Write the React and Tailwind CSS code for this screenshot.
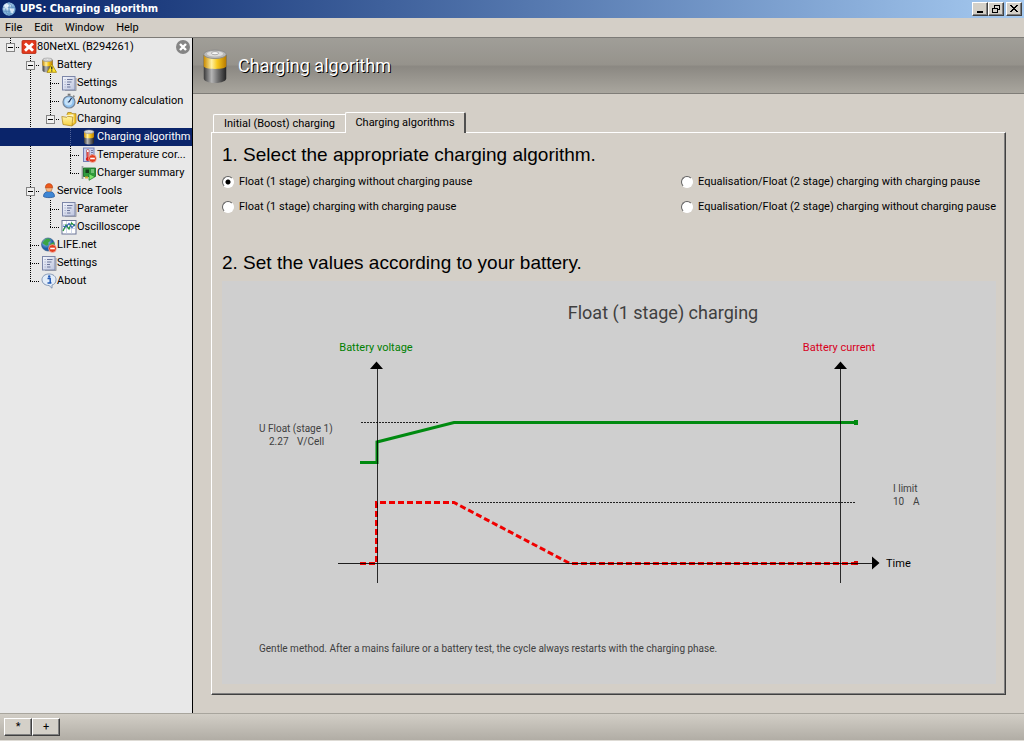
import React, { useState } from "react";

/* ---------- icons ---------- */

function Icon({ children, className = "w-4 h-4" }) {
  return (
    <svg viewBox="0 0 16 16" className={`${className} shrink-0`} aria-hidden="true">
      {children}
    </svg>
  );
}

function BatteryShape() {
  return (
    <g>
      <path d="M3 3v10.500c0 1 2 2 5 2s5-1 5-2V3z" fill="url(#cellDark)" />
      <path d="M3 3v5c0 .8 2 1.300 5 1.300s5-.5 5-1.300V3z" fill="url(#cellGold)" />
      <ellipse cx="8" cy="2.800" rx="5" ry="1.900" fill="#b9b9b9" stroke="#8a8a8a" strokeWidth=".4" />
      <ellipse cx="8" cy="2.600" rx="3.600" ry="1.200" fill="#dedede" />
      <ellipse cx="8" cy="2.300" rx="1.600" ry=".7" fill="#f8f8f8" stroke="#8a8a8a" strokeWidth=".3" />
    </g>
  );
}

function Gradients() {
  return (
    <svg className="absolute w-0 h-0" aria-hidden="true">
      <defs>
        <linearGradient id="cellDark">
          <stop offset="0" stopColor="#3a3a3a" />
          <stop offset=".35" stopColor="#b5b5b5" />
          <stop offset=".65" stopColor="#6a6a6a" />
          <stop offset="1" stopColor="#222" />
        </linearGradient>
        <linearGradient id="cellGold">
          <stop offset="0" stopColor="#c98a00" />
          <stop offset=".35" stopColor="#fff0a0" />
          <stop offset=".6" stopColor="#f7c81c" />
          <stop offset="1" stopColor="#b87a00" />
        </linearGradient>
        <linearGradient id="folderFill" x2="0" y2="1">
          <stop offset="0" stopColor="#fff3a8" />
          <stop offset="1" stopColor="#f6d040" />
        </linearGradient>
        <radialGradient id="globeFill" cx=".35" cy=".3">
          <stop offset="0" stopColor="#b9e4ff" />
          <stop offset="1" stopColor="#1d5fa8" />
        </radialGradient>
        <radialGradient id="paleGlobe" cx=".35" cy=".3">
          <stop offset="0" stopColor="#ffffff" />
          <stop offset="1" stopColor="#7fb0d8" />
        </radialGradient>
        <linearGradient id="pageFill" x2="1" y2="1">
          <stop offset="0" stopColor="#f4f6fc" />
          <stop offset="1" stopColor="#bcc4de" />
        </linearGradient>
      </defs>
    </svg>
  );
}

const AppIcon = () => (
  <Icon className="w-3.5 h-3.5">
    <circle cx="8" cy="8" r="7.500" fill="url(#paleGlobe)" />
    <path d="M1 6h14M1 10.500h14M8 .5v15M8 .5C3 4 3 12 8 15.500M8 .5c5 3.500 5 11.500 0 15" fill="none" stroke="#5d8fc0" strokeWidth="1" />
    <path d="M3 3.500l3-1.500 2 2-2 3-3 .5zM9 8l4-1 1 2-2 4-2-1z" fill="#eef6ff" opacity=".8" />
  </Icon>
);

const FaultIcon = () => (
  <Icon>
    <rect x="1" y="1.500" width="14" height="13" rx="1" fill="#e2381c" stroke="#b42a12" strokeWidth=".8" />
    <path d="M5 3.500l3 2.700 3-2.700 2 2L10.300 8l2.700 2.700-2 2L8 10l-3 2.700-2-2L5.700 8 3 5.500z" fill="#fff" />
  </Icon>
);

const BatteryIcon = () => (
  <Icon>
    <BatteryShape />
  </Icon>
);

const BatteryWarnIcon = () => (
  <Icon>
    <g transform="translate(-1.500 0)">
      <BatteryShape />
    </g>
    <path d="M10.800 7L15.500 15.300H6z" fill="#ffe52e" stroke="#a88600" strokeWidth=".8" strokeLinejoin="round" />
    <path d="M10.800 9.500v3" stroke="#222" strokeWidth="1.300" />
    <circle cx="10.800" cy="13.900" r=".7" fill="#222" />
  </Icon>
);

const PageIcon = () => (
  <Icon>
    <path d="M15 3v12.700H4" fill="none" stroke="#9a9a9a" strokeWidth="1" />
    <rect x="1.500" y="1.500" width="12.500" height="13.500" fill="url(#pageFill)" stroke="#7c86a8" />
    <path d="M6 4.500h5.500M6 7h4.500M6 9.500h3M6 12h3.500" stroke="#6b7499" strokeWidth="1" />
    <path d="M3.500 4.500h1.200M3.500 7h1.200M3.500 9.500h1.200M3.500 12h1.200" stroke="#a3aac6" strokeWidth="1" />
  </Icon>
);

const StopwatchIcon = () => (
  <Icon>
    <path d="M11.500 3.500l1.200-1.500 1.300 1.200-1.300 1.500z" fill="#8a8a8a" />
    <rect x="6.700" y=".7" width="2.800" height="2" fill="#777" />
    <circle cx="8" cy="9" r="6" fill="#8fc1ee" stroke="#75869a" strokeWidth="1.200" />
    <circle cx="7.500" cy="8.500" r="3.900" fill="#c6e2f8" />
    <path d="M8 9l2.500-4M8 9H6.800" stroke="#1c2e55" strokeWidth="1.200" />
  </Icon>
);

const FolderIcon = () => (
  <Icon>
    <path d="M6 3.500l.8-2h3.500l.7 1.200h4v9l-3.500 3z" fill="#f2c62e" stroke="#a07a12" strokeWidth=".7" />
    <path d="M5.500 4l7-.8v8L8 14z" fill="#fff8cc" />
    <path d="M.8 5.500l5 .8 1-1 5 .7L11 15 2 13.500z" fill="url(#folderFill)" stroke="#ad8110" strokeWidth=".7" />
  </Icon>
);

const MinusBadge = () => (
  <g>
    <circle cx="11.500" cy="11.500" r="3.900" fill="#e23c1e" stroke="#fbd0c8" strokeWidth=".6" />
    <rect x="9.200" y="10.700" width="4.600" height="1.600" fill="#fff" />
  </g>
);

const ThermoIcon = () => (
  <Icon>
    <rect x="2.500" y="1" width="10.500" height="13.500" fill="#c7cdee" stroke="#7580b5" />
    <path d="M10 3.500h2M10 5.500h2M10 7.500h2" stroke="#5d6486" strokeWidth=".8" />
    <rect x="5.500" y="2.500" width="2.600" height="8" rx="1.200" fill="#fff" stroke="#a33" strokeWidth=".6" />
    <rect x="6.200" y="5" width="1.300" height="7" fill="#d8201c" />
    <circle cx="6.800" cy="12" r="2" fill="#d8201c" />
    <MinusBadge />
  </Icon>
);

const CardIcon = () => (
  <Icon>
    <path d="M1.500 1v13" stroke="#9aa0a0" strokeWidth="1.800" />
    <path d="M2.500 3H14.500v8.500H2.500z" fill="#2f9a3c" stroke="#14641f" strokeWidth=".8" />
    <rect x="4.500" y="4.500" width="3.500" height="3.500" fill="#173d1c" />
    <path d="M10 5h3M10 7h3" stroke="#b5e8b0" strokeWidth="1" />
    <path d="M4 11.500v2h3v-2" fill="#d8b53a" />
    <path d="M8 8.500l6 3.300-6 3.500z" fill="#7be36a" stroke="#1b7a25" strokeWidth=".7" />
  </Icon>
);

const PersonIcon = () => (
  <Icon>
    <path d="M2.500 13.500c0-3.500 2-5 5.500-5s5.500 1.500 5.500 5c-1 1.500-10 1.500-11 0z" fill="#3e86d4" stroke="#1e4f92" strokeWidth=".7" />
    <circle cx="8" cy="5.500" r="3.200" fill="#f4b98a" stroke="#a8703a" strokeWidth=".5" />
    <path d="M4.300 4.800C4.300 2 6 .6 8 .6s3.700 1.400 3.700 4.200z" fill="#ee5a1c" stroke="#a63408" strokeWidth=".5" />
  </Icon>
);

const ScopeIcon = () => (
  <Icon>
    <rect x="1" y="1.500" width="14" height="13.500" fill="#fff" stroke="#6c7698" />
    <path d="M1.500 5.500h13M1.500 9.500h13M5.500 2v12.500M10.500 2v12.500" stroke="#c3cbe4" strokeWidth=".8" />
    <path d="M2 12l3-6 3 4 2.500-6L14 7" fill="none" stroke="#25953c" strokeWidth="1.300" />
    <path d="M2 7l3 1 3-3.500 3 4 3-3.500" fill="none" stroke="#3560b8" strokeWidth="1.100" />
  </Icon>
);

const GlobeIcon = () => (
  <Icon>
    <circle cx="7" cy="7.500" r="6.500" fill="url(#globeFill)" stroke="#2a4f7c" strokeWidth=".6" />
    <path d="M4 2.500C6.500.8 9 1.500 9.500 3S7 4.500 7.500 6.500 5.500 9.500 4 8 1.500 7 1.500 5.500zM9.500 6.500l3.500-1.500c1 2.500 0 5-1.500 6.500S8.500 8.500 9.500 6.500z" fill="#3ba544" />
    <MinusBadge />
  </Icon>
);

const InfoIcon = () => (
  <Icon>
    <path d="M8 1c4 0 7 2.300 7 5.700s-2 4.800-4 5.300v3.200L8 12.500c-4 0-7-2.400-7-5.800S4 1 8 1z" fill="#e3edf9" stroke="#7a8eae" strokeWidth=".9" />
    <circle cx="8.200" cy="3.500" r="1.200" fill="#2259b5" />
    <path d="M6.500 5.600h2.700v4.200h1M6.500 9.900h3.900" fill="none" stroke="#2259b5" strokeWidth="1.500" />
  </Icon>
);

/* ---------- tree ---------- */

/* Guides per row: "" empty, "v" pass-through, "t" branch, "l" last branch,
   "m" open node with more siblings, "o" open node as last sibling. */
const TREE = [
  { guides: ["r"], icon: FaultIcon, label: "80NetXL (B294261)", closable: true },
  { guides: ["", "m"], icon: BatteryWarnIcon, label: "Battery" },
  { guides: ["", "v", "t"], icon: PageIcon, label: "Settings" },
  { guides: ["", "v", "t"], icon: StopwatchIcon, label: "Autonomy calculation" },
  { guides: ["", "v", "o"], icon: FolderIcon, label: "Charging" },
  { guides: ["", "v", "", "t"], icon: BatteryIcon, label: "Charging algorithm" },
  { guides: ["", "v", "", "t"], icon: ThermoIcon, label: "Temperature cor..." },
  { guides: ["", "v", "", "l"], icon: CardIcon, label: "Charger summary" },
  { guides: ["", "m"], icon: PersonIcon, label: "Service Tools" },
  { guides: ["", "v", "t"], icon: PageIcon, label: "Parameter" },
  { guides: ["", "v", "l"], icon: ScopeIcon, label: "Oscilloscope" },
  { guides: ["", "t"], icon: GlobeIcon, label: "LIFE.net" },
  { guides: ["", "t"], icon: PageIcon, label: "Settings" },
  { guides: ["", "l"], icon: InfoIcon, label: "About" },
];

function Guide({ kind, dim }) {
  const open = kind === "m" || kind === "o" || kind === "r";
  const end = kind === "l" || kind === "o" || kind === "r" ? 9 : 18;
  const ink = dim ? "#51639a" : "#000";
  return (
    <svg viewBox="0 0 20 18" className="w-5 h-[18px] shrink-0" shapeRendering="crispEdges" aria-hidden="true">
      {kind && !(dim && kind === "v") && <path d={`M10.500 0V${end}`} stroke={ink} strokeDasharray="1 1" />}
      {kind && kind !== "v" && !dim && <path d="M10 9.500H19" stroke={ink} strokeDasharray="1 1" />}
      {open && (
        <g>
          <rect x="6.500" y="5.500" width="8" height="8" fill="#f0f0f0" stroke="#848484" />
          <path d="M8 9.500h5" stroke="#000" />
        </g>
      )}
    </svg>
  );
}

function Tree() {
  const [selected, setSelected] = useState(5);
  return (
    <nav className="w-[193px] shrink-0 bg-[#e8e8e8] border-r border-black" aria-label="Device tree">
      <ul>
        {TREE.map((row, i) => {
          const RowIcon = row.icon;
          const on = i === selected;
          return (
            <li key={i} className={on ? "flex h-[18px] items-center bg-[#0a246a] text-white" : "flex h-[18px] items-center text-black"}>
              {row.guides.map((g, k) => (
                <Guide key={k} kind={g} dim={on} />
              ))}
              <button type="button" onClick={() => setSelected(i)} className="flex flex-1 items-center pl-px whitespace-nowrap text-left">
                <RowIcon />
                <span>{row.label}</span>
              </button>
              {row.closable && (
                <button type="button" aria-label="Close" className="mr-px">
                  <Icon>
                    <circle cx="8" cy="8" r="7" fill="#858585" />
                    <path d="M5 5l6 6M11 5l-6 6" stroke="#fff" strokeWidth="2.400" />
                  </Icon>
                </button>
              )}
            </li>
          );
        })}
      </ul>
    </nav>
  );
}

/* ---------- window chrome ---------- */

const BEVEL = "bg-[#d4d0c8] border border-t-white border-l-white border-r-[#404040] border-b-[#404040] shadow-[inset_-1px_-1px_0_#808080]";

function CaptionButton({ label, children }) {
  return (
    <button type="button" aria-label={label} className={`${BEVEL} w-4 h-3.5 flex items-center justify-center`}>
      <svg viewBox="0 0 12 10" className="w-3 h-2.5 shrink-0" shapeRendering="crispEdges" fill="none" stroke="#000" aria-hidden="true">
        {children}
      </svg>
    </button>
  );
}

function TitleBar() {
  return (
    <header className="flex h-[18px] items-center gap-0.5 bg-linear-to-r from-[#0a246a] to-[#a6caf0] pl-0.5 pr-0.5">
      <AppIcon />
      <h1 className="flex-1 pl-0.5 font-['DejaVu_Sans_Condensed','DejaVu_Sans',Tahoma,sans-serif] font-bold text-white">UPS: Charging algorithm</h1>
      <div className="flex">
        <CaptionButton label="Minimize">
          <path d="M3 8h6" strokeWidth="2" />
        </CaptionButton>
        <CaptionButton label="Restore">
          <path d="M4 1h6M4.500 1v3M9.500 1v5M7 5.500h3M4 1.500h6M2 4h6M2 4.500h6M2.500 4v5M7.500 4v5M2 8.500h6" />
        </CaptionButton>
      </div>
      <CaptionButton label="Close">
        <path d="M2 1h2v1h1v1h2V2h1V1h2v1H9v1H8v1H7v1h1v1h1v1h1v1H8V7H7V6H5v1H4v1H2V7h1V6h1V5h1V4H4V3H3V2H2z" fill="#000" stroke="none" />
      </CaptionButton>
    </header>
  );
}

function MenuBar() {
  return (
    <nav className="flex h-5 items-center gap-3 border-b border-[#7d7b77] pl-[5px]">
      {["File", "Edit", "Window", "Help"].map((m) => (
        <button type="button" key={m}>
          {m}
        </button>
      ))}
    </nav>
  );
}

/* ---------- content ---------- */

function AlgorithmChart() {
  return (
    <svg viewBox="0 0 774 350" className="block w-full h-auto" role="img" aria-label="Float (1 stage) charging">
      <text x="441" y="38" textAnchor="middle" className="text-[18px]" fill="#404040">Float (1 stage) charging</text>
      <text x="154" y="70" textAnchor="middle" fill="#008000">Battery voltage</text>
      <text x="617" y="70" textAnchor="middle" fill="#d8001c">Battery current</text>

      <g stroke="#222" strokeDasharray="2 1">
        <path d="M139 141.500H216" />
        <path d="M247 221.500H633" />
      </g>

      <path d="M138 181.500H155V161L232 141.500H635" fill="none" stroke="#008a10" strokeWidth="3" />
      <rect x="632" y="139" width="4" height="5" fill="#008a10" />
      <path d="M138 282.500H154.500V221.500H232L348 282.500H635" fill="none" stroke="#f00000" strokeWidth="3" strokeDasharray="6 3" />
      <rect x="632" y="280" width="4" height="4" fill="#d00000" />

      <path d="M116 282.500H651" stroke="#000" opacity=".85" />
      <path d="M155.500 86V302M618.500 86V302" stroke="#000" opacity=".8" />
      <path d="M154.500 80.500L161 88H148zM618.500 80.500L625 88H612zM657.500 282L650 275.500V288.500z" fill="#000" />

      <g fill="#404040" className="text-[10px]">
        <text x="37" y="151">U Float (stage 1)</text>
        <text x="47" y="164">2.27</text>
        <text x="75" y="164">V/Cell</text>
        <text x="671" y="211">I limit</text>
        <text x="671" y="224">10</text>
        <text x="691" y="224">A</text>
      </g>
      <text x="664" y="286">Time</text>
    </svg>
  );
}

const OPTIONS = [
  "Float (1 stage) charging without charging pause",
  "Equalisation/Float (2 stage) charging with charging pause",
  "Float (1 stage) charging with charging pause",
  "Equalisation/Float (2 stage) charging without charging pause",
];

function Options() {
  const [value, setValue] = useState(0);
  return (
    <fieldset className="grid grid-cols-[459px_1fr]">
      {OPTIONS.map((text, i) => (
        <label key={text} className="flex h-[25px] items-center gap-[5px] whitespace-nowrap">
          <input
            type="radio"
            name="algorithm"
            checked={value === i}
            onChange={() => setValue(i)}
            className="w-3 h-3 shrink-0 appearance-none rounded-full border border-t-[#606060] border-l-[#606060] border-r-white border-b-white bg-white checked:bg-[radial-gradient(circle,black_2px,white_3px)]"
          />
          {text}
        </label>
      ))}
    </fieldset>
  );
}

function Content() {
  return (
    <main className="flex min-w-0 flex-1 flex-col">
      <header className="flex h-14 shrink-0 items-center gap-[5px] border-b border-[#7f7d78] bg-[linear-gradient(#a09e98,#96938c_48%,#8b8882_52%,#a9a69e)] pl-1">
        <Icon className="w-9 h-9">
          <BatteryShape />
        </Icon>
        <h2 className="text-[18px] text-white [text-shadow:1px_1px_0_#000]">Charging algorithm</h2>
      </header>

      <div className="flex flex-1 flex-col pt-[18px] pr-[18px] pb-[18px] pl-[18px]">
        <div role="tablist" className="flex items-end pl-0.5">
          <button type="button" role="tab" aria-selected="false" className="h-[18px] w-[132px] rounded-tl-xs border-t border-l border-white leading-4">
            Initial (Boost) charging
          </button>
          <button type="button" role="tab" aria-selected="true" className="relative -mb-px h-[21px] w-[121px] rounded-t-xs border-t border-l border-r-2 border-t-white border-l-white border-r-[#505050] bg-[#d4cfc7]">
            Charging algorithms
          </button>
        </div>

        <section className="flex flex-1 flex-col border border-t-white border-l-white border-r-[#404040] border-b-[#404040] shadow-[inset_-1px_-1px_0_#808080] pt-2.5 pr-[9px] pb-2.5 pl-2.5">
          <h3 className="font-['Liberation_Sans',Arial,sans-serif] text-[19px] leading-6">1. Select the appropriate charging algorithm.</h3>
          <div className="pt-0.5 pb-8">
            <Options />
          </div>
          <h3 className="font-['Liberation_Sans',Arial,sans-serif] text-[19px] leading-6">2. Set the values according to your battery.</h3>
          <div className="mt-1.5 flex-1 bg-[#cfcfcf]">
            <AlgorithmChart />
            <p className="pt-3 pl-[37px] text-[10px] leading-3 text-[#404040]">
              Gentle method. After a mains failure or a battery test, the cycle always restarts with the charging phase.
            </p>
          </div>
        </section>
      </div>
    </main>
  );
}

export default function App() {
  return (
    <div className="flex min-h-screen flex-col bg-[#d4cfc7] font-[Roboto,Tahoma,sans-serif] text-[11px] leading-4 text-black">
      <Gradients />
      <TitleBar />
      <MenuBar />
      <div className="flex flex-1">
        <Tree />
        <Content />
      </div>
      <footer className="flex h-7 items-center border-t border-b border-t-[#a8a59d] border-b-[#dedbd5] bg-linear-to-b from-[#d2cec6] to-[#b1ada5] pl-1">
        <button type="button" className={`${BEVEL} h-[18px] w-7 leading-3`}>*</button>
        <button type="button" className={`${BEVEL} h-[18px] w-7 leading-3`}>+</button>
      </footer>
    </div>
  );
}
